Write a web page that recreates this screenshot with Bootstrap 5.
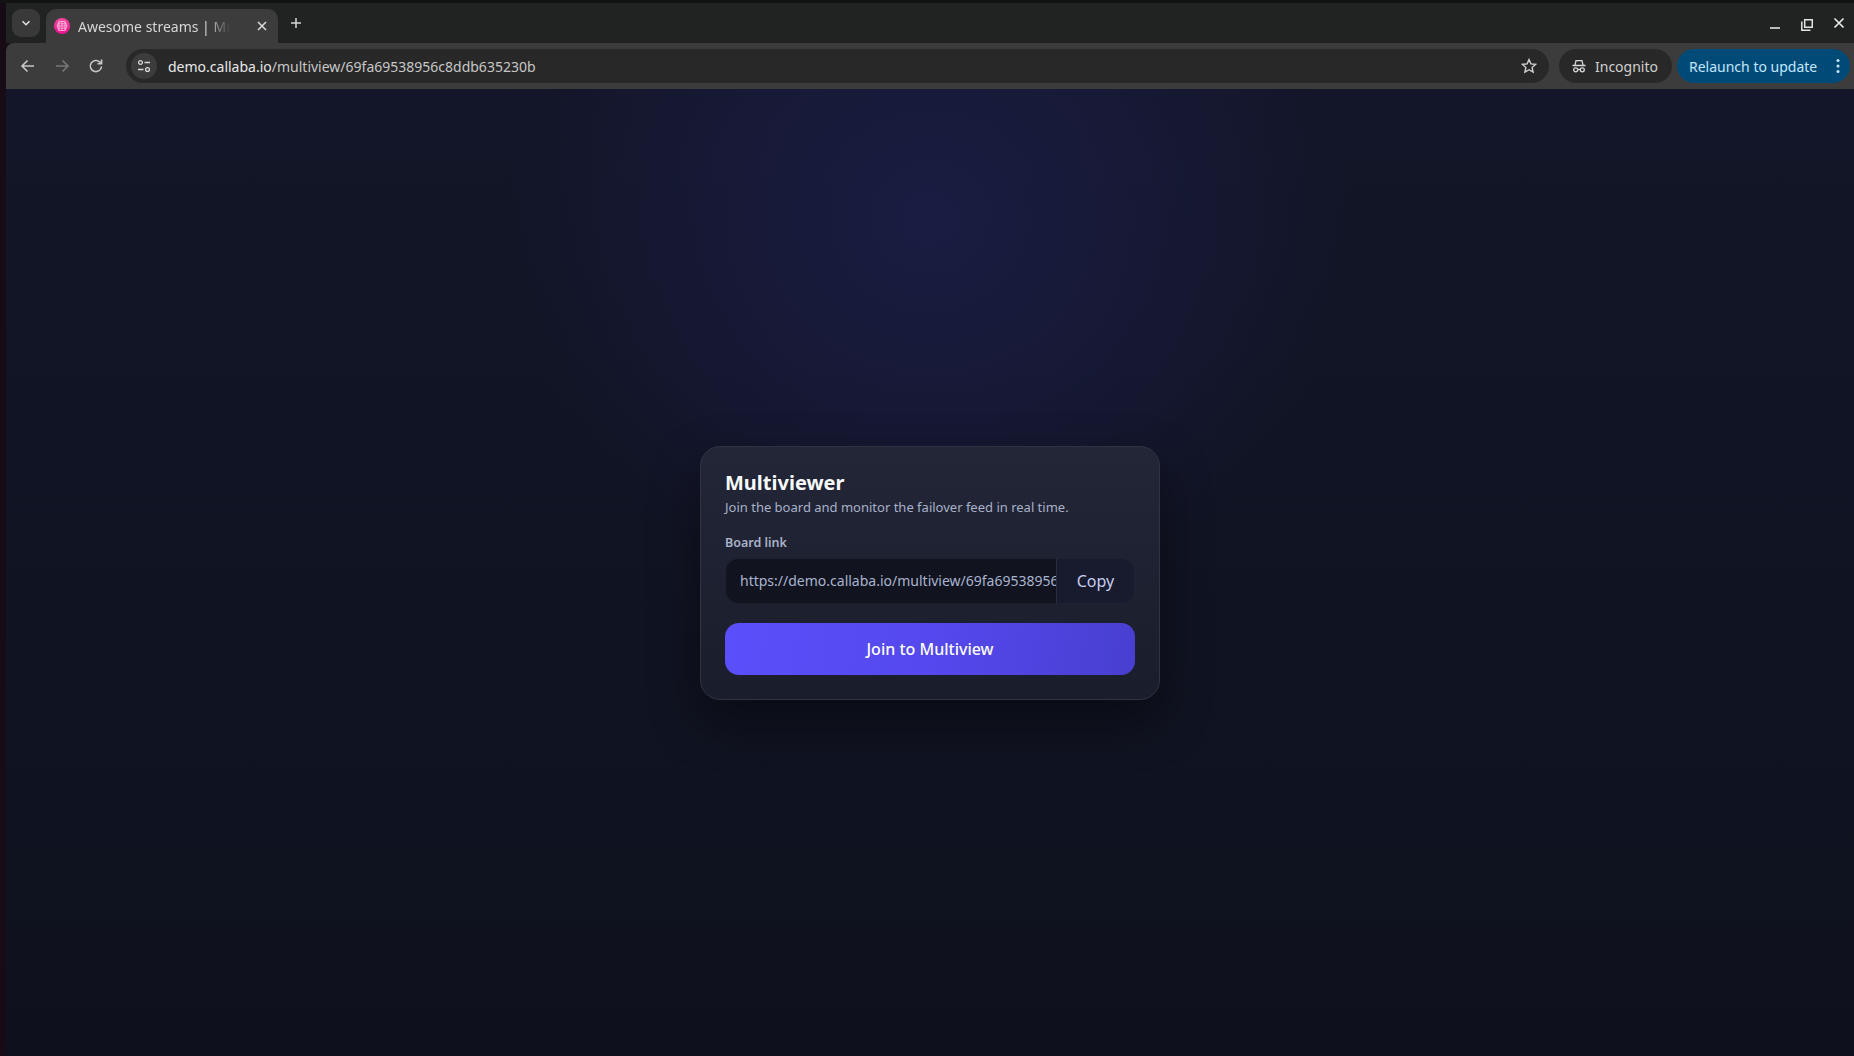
<!DOCTYPE html>
<html lang="en">
<head>
    <meta charset="UTF-8">
    <meta name="viewport" content="width=device-width, initial-scale=1.0">
    <title>Awesome streams | Multiview</title>
    <link href="https://cdn.jsdelivr.net/npm/bootstrap@5.3.3/dist/css/bootstrap.min.css" rel="stylesheet">
    <script src="https://cdn.jsdelivr.net/npm/bootstrap@5.3.3/dist/js/bootstrap.bundle.min.js"></script>
    <style>
        html, body { height: 100%; }
        body {
            background: #170b16;
            font-family: "Noto Sans", "Open Sans", sans-serif;
            overflow: hidden;
        }
        .top-edge { height: 3px; background: #111211; }
        .desktop { padding-left: 6px; height: calc(100vh - 3px); }
        .tab-strip { height: 40px; background: #212322; color: #d6d6d6; }
        .tab-list-btn { width: 28px; height: 28px; margin: 6px 6px 0 6px; background: #393939; border-radius: 9px; }
        .browser-tab { width: 232px; height: 34px; margin-top: 6px; padding: 0 10px 0 8px; background: #3c3c3c; border-radius: 10px 10px 0 0; font-size: 14px; }
        .tab-title { width: 152px; margin-left: 8px; white-space: nowrap; overflow: hidden; -webkit-mask-image: linear-gradient(90deg, #000 85%, transparent); mask-image: linear-gradient(90deg, #000 85%, transparent); }
        .tab-new { margin-left: 11px; margin-top: 6px; }
        .win-controls { gap: 20px; padding-right: 9px; }
        .tool-row { height: 46px; background: #3c3c3c; padding: 6px 4px 6px 0; border-bottom: 0; border-radius: 8px 0 0 0; color: #c7c7c7; }
        .nav-icons { width: 120px; padding-left: 13px; gap: 16px; }
        .address-bar { height: 34px; flex: 1 1 auto; background: #282828; border-radius: 17px; padding: 0 12px 0 5px; font-size: 14px; color: #c7c7c7; }
        .site-chip { width: 26px; height: 26px; border-radius: 50%; background: #3c3c3c; margin-right: 11px; }
        .url-host { color: #e8e8e8; }
        .profile-pill { height: 34px; width: 113px; margin-left: 10px; padding-left: 12px; background: #282828; border-radius: 17px; font-size: 14px; color: #d0d0d0; gap: 8px; }
        .update-pill { height: 34px; width: 173px; margin-left: 5px; padding: 0 10px 0 12px; background: #004a77; border-radius: 17px; font-size: 14px; color: #c2e7ff; }
        .page-area {
            height: calc(100% - 86px);
            background-color: #0f1220;
            background-image: radial-gradient(ellipse 420px 400px at 50% 130px, #1a1c42 0%, rgba(26, 28, 66, 0.55) 50%, rgba(15, 18, 32, 0) 100%), linear-gradient(180deg, #131628 0%, #0e111d 100%);
        }
        .join-card {
            width: 460px;
            background: linear-gradient(180deg, #222637 0%, #1a1d2b 100%);
            border: 1px solid #2f3342;
            border-radius: 20px;
            padding: 24px;
            box-shadow: 0 20px 50px rgba(0, 0, 0, 0.4);
            color: #fff;
        }
        .join-title { font-size: 20px; font-weight: 700; line-height: 24px; margin: 0 0 3px; color: #f8f9fb; }
        .join-sub { font-size: 13px; line-height: 18px; margin: 0 0 18px; color: #a9b1c9; }
        .join-label { font-size: 12.5px; font-weight: 600; line-height: 18px; margin: 0 0 6px; color: #aab2c8; }
        .link-group { height: 46px; margin-bottom: 19px; }
        .link-group .form-control {
            background: #11131f; border: 1px solid #1c1f2e; border-right: 0; color: #a9b4d0;
            font-size: 14px; padding: 0 0 0 14px; border-radius: 14px 0 0 14px; box-shadow: none;
        }
        .link-group .btn-copy {
            width: 79px; background: #181a2d; border: 1px solid #1f2233; border-left-color: #2a2d3c; color: #c6cdf0;
            font-size: 16px; border-radius: 0 14px 14px 0; padding: 0;
        }
        .btn-join {
            height: 52px; background: linear-gradient(100deg, #5a4ffb 0%, #5548ee 50%, #483fd0 100%); border: 0; color: #fff;
            font-size: 16px; font-weight: 500; border-radius: 14px;
        }
    </style>
</head>
<body>
    <div class="top-edge"></div>
    <div class="desktop">
        <div class="tab-strip d-flex align-items-start">
            <div class="tab-list-btn d-flex align-items-center justify-content-center">
                <svg width="12" height="12" viewBox="0 0 12 12" fill="none" stroke="#e0e0e0" stroke-width="1.6"><path d="M2.5 4.2 6 7.7l3.5-3.5"/></svg>
            </div>
            <div class="browser-tab d-flex align-items-center">
                <svg width="16" height="16" viewBox="0 0 16 16">
                    <defs><linearGradient id="favGrad" x1="0" y1="0" x2="0" y2="1"><stop offset="0" stop-color="#f2479f"/><stop offset="1" stop-color="#f01090"/></linearGradient></defs>
                    <circle cx="8" cy="8" r="8" fill="url(#favGrad)"/>
                    <path d="M5 3.5h6L13 8l-2 4.5H5L3 8zM3 8h10M8 3v10M5 3.5v9M11 3.5v9M3.8 5.8h8.4M3.8 10.2h8.4" fill="none" stroke="#ffd4ea" stroke-width=".7"/>
                </svg>
                <div class="tab-title">Awesome streams | Multiview</div>
                <svg class="ms-auto" width="12" height="12" viewBox="0 0 12 12" fill="none" stroke="#dcdcdc" stroke-width="1.5"><path d="m2 2 8 8M10 2l-8 8"/></svg>
            </div>
            <svg class="tab-new" width="14" height="28" viewBox="0 0 14 28" fill="none" stroke="#d6d6d6" stroke-width="1.5"><path d="M7 9v10M2 14h10"/></svg>
            <div class="win-controls d-flex align-items-center ms-auto mt-2">
                <svg width="12" height="24" viewBox="0 0 12 24" fill="none" stroke="#e4e4e4" stroke-width="1.6"><path d="M1 17h10"/></svg>
                <svg width="12" height="24" viewBox="0 0 12 24" fill="none" stroke="#e4e4e4" stroke-width="1.5"><path d="M3.7 8.7h7.6v7.6H3.7zM.8 10.5v8.7h8.7"/></svg>
                <svg width="12" height="24" viewBox="0 0 12 24" fill="none" stroke="#e8e8e8" stroke-width="1.7"><path d="m1.5 7.5 9 9M10.5 7.5l-9 9"/></svg>
            </div>
        </div>
        <div class="tool-row d-flex align-items-center">
            <div class="nav-icons d-flex align-items-center">
                <svg width="18" height="18" viewBox="0 0 18 18" fill="none" stroke="#c7c7c7" stroke-width="1.6"><path d="M15 9H3.5M8.5 3.5 3 9l5.5 5.5"/></svg>
                <svg width="18" height="18" viewBox="0 0 18 18" fill="none" stroke="#777" stroke-width="1.6"><path d="M3 9h11.5M9.5 3.5 15 9l-5.5 5.5"/></svg>
                <svg width="18" height="18" viewBox="0 0 18 18" fill="none" stroke="#c7c7c7" stroke-width="1.6"><path d="M14.5 9.5a5.6 5.6 0 1 1-1.6-4.4l1.6 1.6M14.6 2.6v4.2h-4.2"/></svg>
            </div>
            <div class="address-bar d-flex align-items-center">
                <div class="site-chip d-flex align-items-center justify-content-center">
                    <svg width="16" height="16" viewBox="0 0 16 16" fill="none" stroke="#d8d8d8" stroke-width="1.3"><circle cx="4.5" cy="4.5" r="1.9"/><path d="M8.5 4.5H14M2 11.5h5.5"/><circle cx="11.5" cy="11.5" r="1.9"/></svg>
                </div>
                <span><span class="url-host">demo.callaba.io</span>/multiview/69fa69538956c8ddb635230b</span>
                <svg class="ms-auto" width="16" height="16" viewBox="0 0 16 16" fill="none" stroke="#d0d0d0" stroke-width="1.4"><path d="m8 1.6 1.9 4.3 4.7.5-3.5 3.1 1 4.6L8 11.7l-4.1 2.4 1-4.6L1.400 6.400l4.700-.5z"/></svg>
            </div>
            <div class="profile-pill d-flex align-items-center">
                <svg width="16" height="16" viewBox="0 0 16 16" fill="none" stroke="#d6d6d6" stroke-width="1.3"><path d="M1.500 7.500h13M4 7.200 5 2.700h6l1 4.500"/><circle cx="4.700" cy="11.800" r="2"/><circle cx="11.300" cy="11.800" r="2"/><path d="M6.700 11.500h2.600"/></svg>
                <span>Incognito</span>
            </div>
            <div class="update-pill d-flex align-items-center justify-content-between">
                <span>Relaunch to update</span>
                <svg width="4" height="16" viewBox="0 0 4 16" fill="#c2e7ff"><circle cx="2" cy="2.500" r="1.500"/><circle cx="2" cy="8" r="1.500"/><circle cx="2" cy="13.500" r="1.500"/></svg>
            </div>
        </div>
        <div class="page-area d-flex align-items-center justify-content-center">
            <div class="join-card">
                <h1 class="join-title">Multiviewer</h1>
                <p class="join-sub">Join the board and monitor the failover feed in real time.</p>
                <div class="join-label">Board link</div>
                <div class="input-group link-group">
                    <input type="text" class="form-control" readonly value="https://demo.callaba.io/multiview/69fa69538956c8ddb635230b">
                    <button type="button" class="btn btn-copy">Copy</button>
                </div>
                <button type="button" class="btn btn-join w-100">Join to Multiview</button>
            </div>
        </div>
    </div>
</body>
</html>
